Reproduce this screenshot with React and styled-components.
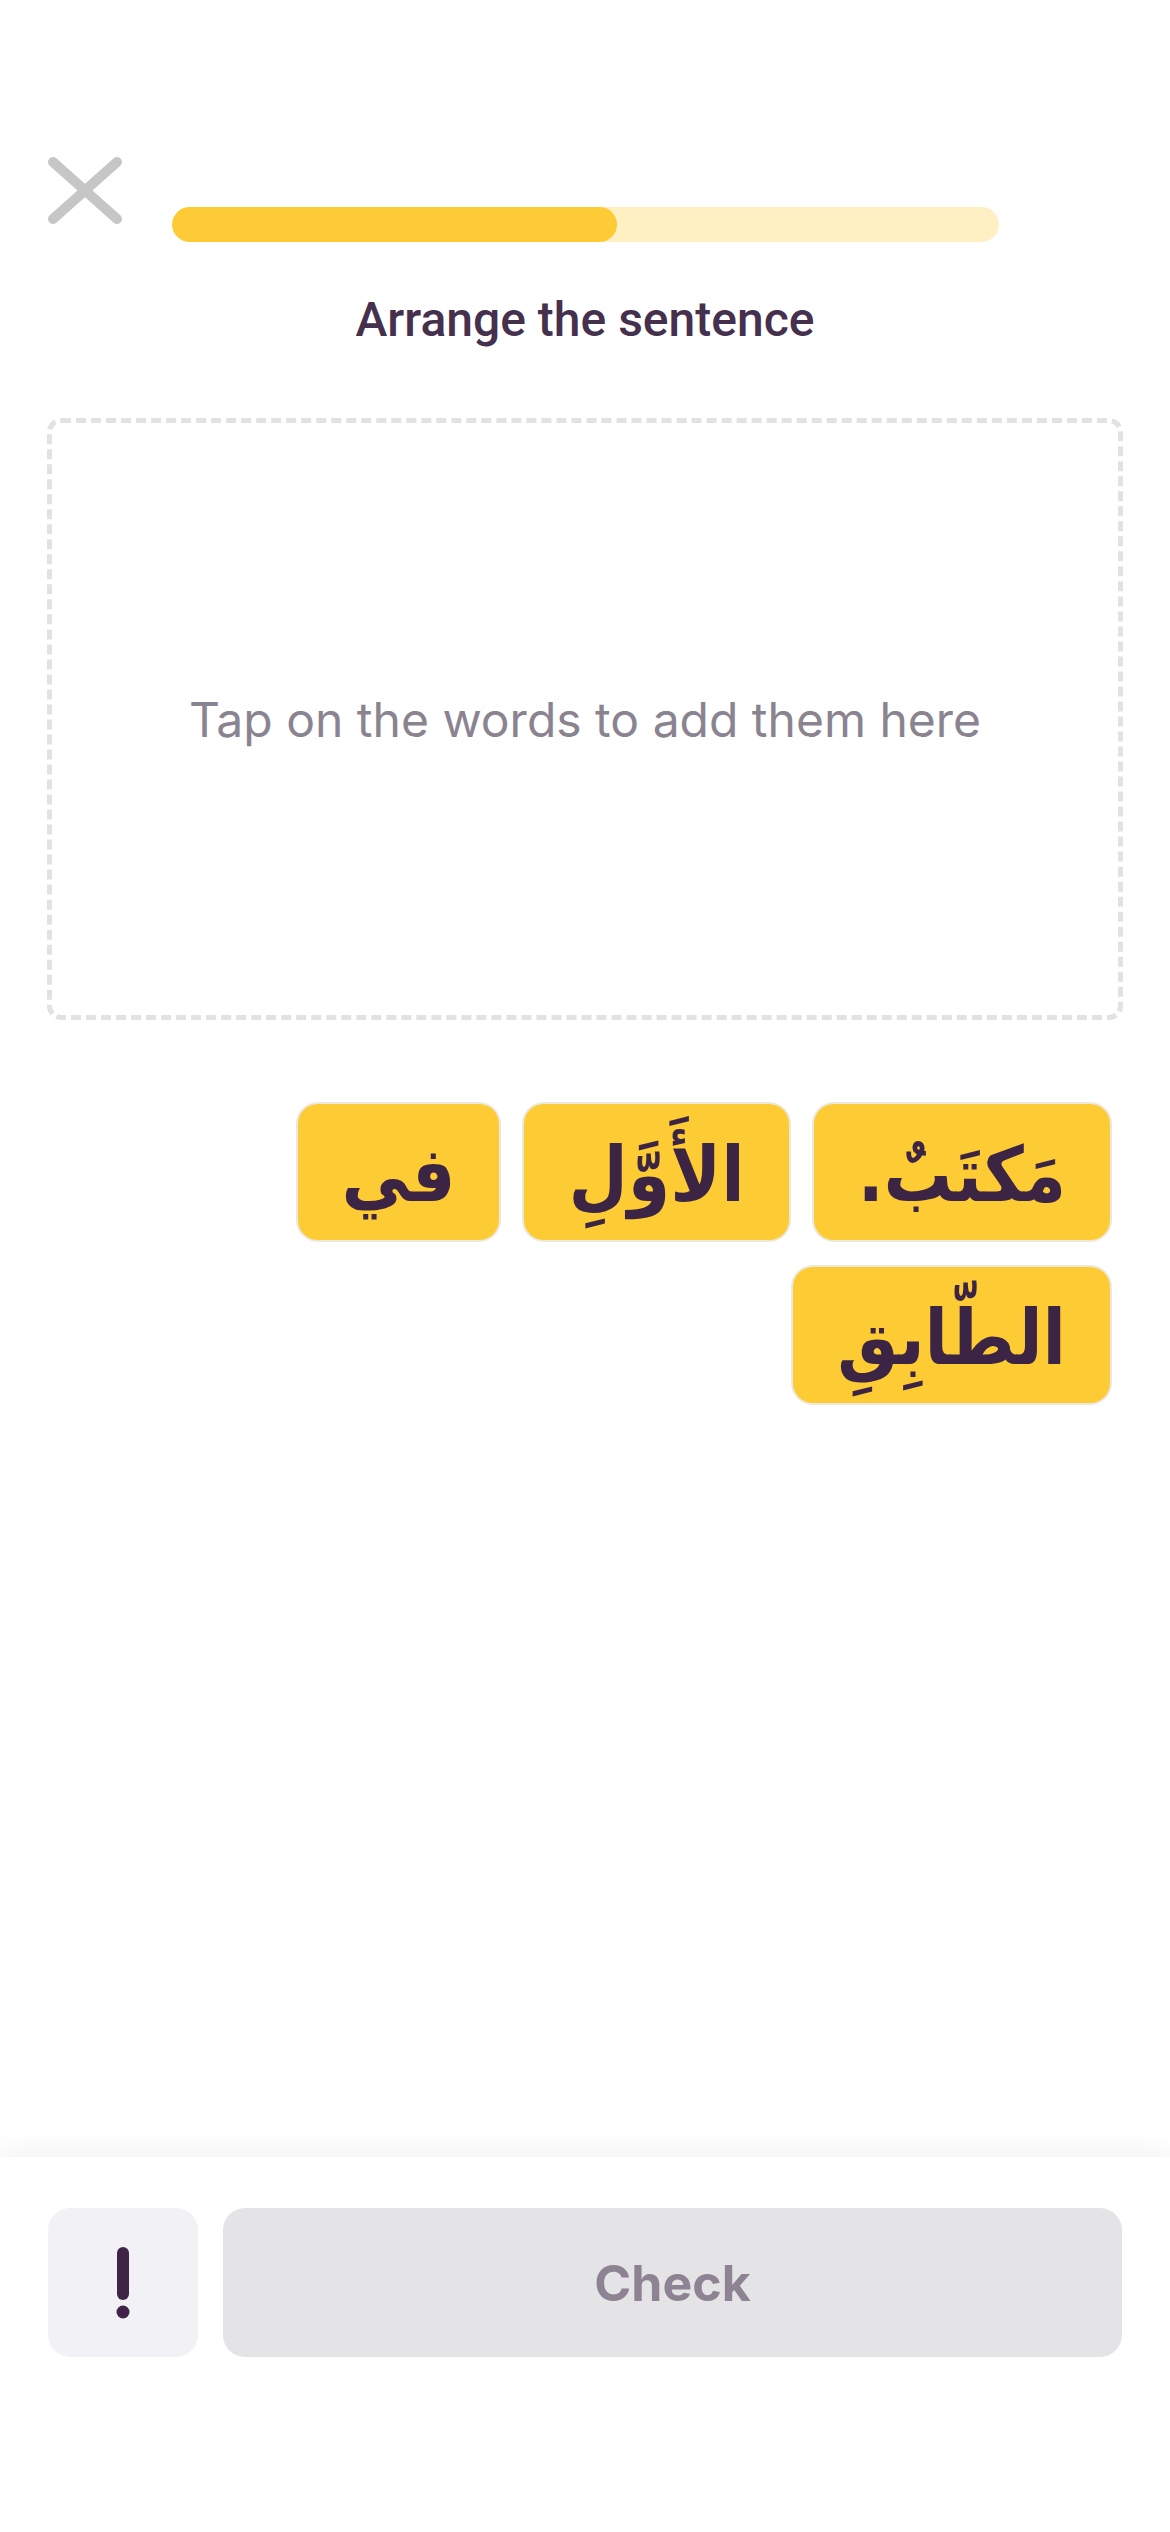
import React from "react";
import styled, { createGlobalStyle } from "styled-components";

const GlobalStyle = createGlobalStyle`
  html, body {
    margin: 0;
    padding: 0;
    background: #ffffff;
  }
  body {
    width: 1170px;
    min-height: 2532px;
  }
  * { box-sizing: border-box; }
`;

const Screen = styled.div`
  width: 1170px;
  height: 2532px;
  display: flex;
  flex-direction: column;
  background: #ffffff;
  font-family: Roboto, "Noto Sans", sans-serif;
`;

const Main = styled.main`
  flex: 1;
  display: flex;
  flex-direction: column;
  padding: 156px 47px 0;
`;

const Header = styled.header`
  display: flex;
  align-items: flex-start;
  gap: 49px;
`;

const CloseButton = styled.button`
  width: 76px;
  height: 69px;
  padding: 0;
  border: 0;
  background: none;
  display: flex;
  cursor: pointer;
`;

const Progress = styled.div`
  margin-top: 51px;
  width: 827px;
  height: 35px;
  border-radius: 18px;
  background: #fff0c4;
  overflow: hidden;
`;

const ProgressFill = styled.div`
  height: 100%;
  border-radius: 18px;
  background: #fdcb35;
`;

const Title = styled.h1`
  margin: 50px 0 0;
  text-align: center;
  font-family: Roboto, sans-serif;
  font-weight: 500;
  font-size: 48px;
  line-height: 56px;
  color: #45304d;
`;

const DropZone = styled.div`
  margin-top: 70px;
  height: 602px;
  border: 5px dashed #e2e2e2;
  border-radius: 14px;
  display: flex;
  align-items: center;
  justify-content: center;
`;

const Placeholder = styled.p`
  margin: 0;
  font-family: Inter, "Open Sans", sans-serif;
  font-weight: 400;
  font-size: 48px;
  color: #8a8390;
`;

const WordBank = styled.div`
  margin-top: 84px;
  padding-right: 13px;
  display: flex;
  flex-wrap: wrap;
  direction: rtl;
  gap: 27px 25px;
`;

const WordTile = styled.button`
  height: 136px;
  padding: 6px 44px 0;
  border: 0;
  border-radius: 20px;
  background: #fdcb33;
  box-shadow: 0 0 0 2px #ece8de;
  display: flex;
  align-items: center;
  justify-content: center;
  font-family: "DejaVu Sans Condensed", "DejaVu Sans", sans-serif;
  font-weight: 700;
  font-size: 76px;
  line-height: 1;
  color: #3b2444;
  direction: rtl;
  cursor: pointer;
`;

const Footer = styled.footer`
  height: 375px;
  padding: 51px 48px 0;
  display: flex;
  align-items: flex-start;
  gap: 25px;
  background: #ffffff;
  box-shadow: 0 -8px 22px rgba(30, 40, 70, 0.05);
`;

const HintButton = styled.button`
  width: 150px;
  height: 149px;
  border: 0;
  border-radius: 22px;
  background: #f2f1f5;
  display: flex;
  align-items: center;
  justify-content: center;
  padding: 0;
`;

const CheckButton = styled.button`
  flex: 1;
  height: 149px;
  border: 0;
  border-radius: 22px;
  background: #e4e4e6;
  font-family: Inter, sans-serif;
  font-weight: 700;
  font-size: 50px;
  color: #8e8393;
  padding: 0;
`;

const words = ["مَكتَبٌ.", "الأَوَّلِ", "في", "الطّابِقِ"];
const progress = 0.538;

export default function App() {
  return (
    <>
      <GlobalStyle />
      <Screen>
        <Main>
          <Header>
            <CloseButton aria-label="Close">
              <svg width="76" height="69" viewBox="0 0 76 69">
                <path
                  d="M6 6 L70 63 M70 6 L6 63"
                  stroke="#c6c6c6"
                  strokeWidth="10"
                  strokeLinecap="round"
                  fill="none"
                />
              </svg>
            </CloseButton>
            <Progress>
              <ProgressFill style={{ width: `${progress * 100}%` }} />
            </Progress>
          </Header>
          <Title>Arrange the sentence</Title>
          <DropZone>
            <Placeholder>Tap on the words to add them here</Placeholder>
          </DropZone>
          <WordBank>
            {words.map((w) => (
              <WordTile key={w}>{w}</WordTile>
            ))}
          </WordBank>
        </Main>
        <Footer>
          <HintButton aria-label="Hint">
            <svg width="14" height="72" viewBox="0 0 14 72">
              <rect x="1" y="0" width="12" height="53" rx="6" fill="#3f2448" />
              <circle cx="7" cy="65" r="6.5" fill="#3f2448" />
            </svg>
          </HintButton>
          <CheckButton>Check</CheckButton>
        </Footer>
      </Screen>
    </>
  );
}
